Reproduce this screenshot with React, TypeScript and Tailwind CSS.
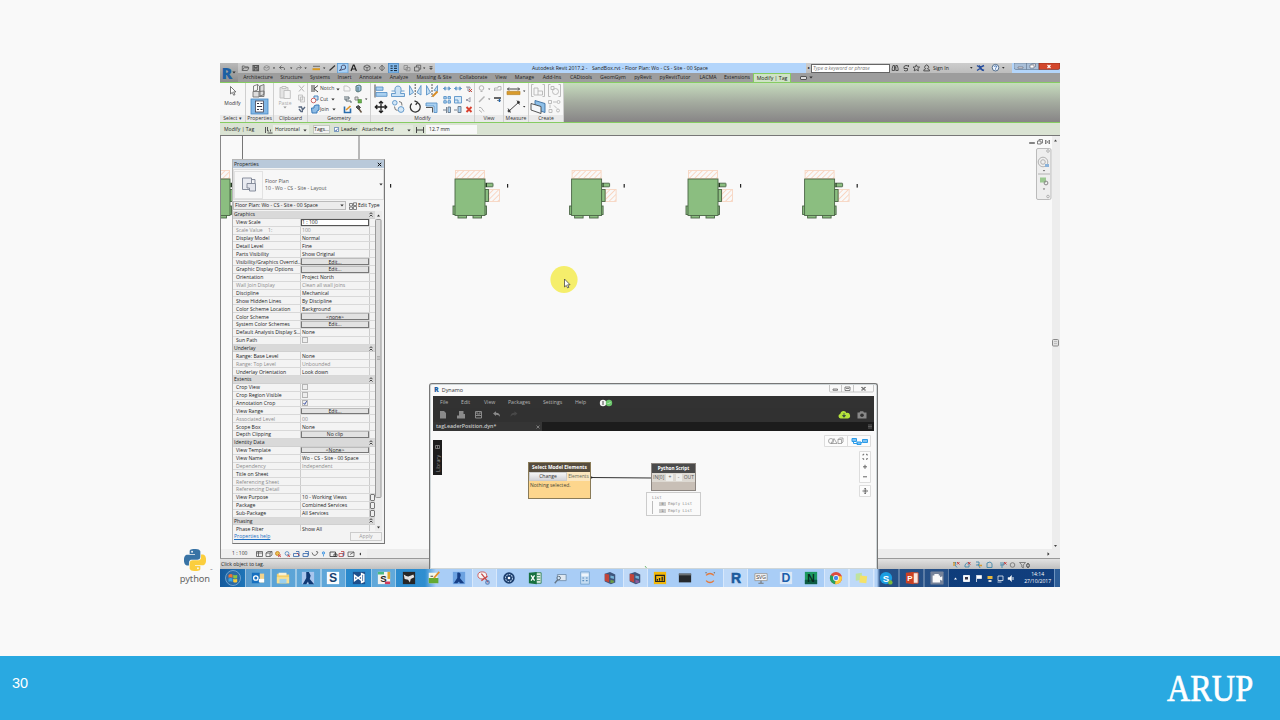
import React from 'react';

type Kids = { children?: React.ReactNode };

/* ---------- shared pieces ---------- */

function Caret({ c = '#333' }: { c?: string }) {
  return (
    <svg width="4" height="3" viewBox="0 0 4 3" className="shrink-0">
      <path d="M0.3 0.5h3.4L2 2.6z" fill={c} />
    </svg>
  );
}

/* ---------- title bar and tabs ---------- */

function QuickAccess() {
  return (
    <svg width="197" height="10" viewBox="238 63 197 10" fill="none" stroke="#555" strokeWidth="0.8" className="shrink-0">
      <path d="M242.300 70.500v-4.500h2.200l.7.900h3v1M242.300 70.500l1.500-2.700h5.200l-1.600 2.700z" />
      <path d="M253 65.500h5.500v5.200H253zM254.300 65.500v1.900h2.900v-1.900M254.300 70.700v-1.800h2.900v1.800" strokeWidth="1.1" />
      <path d="M264 69.500v-2.500l2.500-1.500 2.700 1.200v2.500l-2.500 1.300zM264 67l2.500 1 2.700-1.300" stroke="#888" />
      <path d="M272.800 67.500h2.400l-1.200 1.500zM290 67.500h2.400l-1.200 1.500zM304.400 67.500h2.400l-1.200 1.500zM323 67.500h2.400l-1.200 1.500zM373.700 67.500h2.400l-1.200 1.500zM423 67.500h2.400l-1.200 1.500z" fill="#333" stroke="none" />
      <path d="M279.500 67.500l2-2M279.500 67.500l2 1.800M279.500 67.500h3.800q2 .5 1 2.500" />
      <path d="M301.500 67.500l-2-2M301.500 67.500l-2 1.800M301.500 67.500h-3.500q-2 .5-1 2.500" stroke="#777" />
      <path d="M313 66.300h7" />
      <path d="M312.500 68.200h7.500v2h-7.500z" fill="#d99a25" stroke="none" />
      <path d="M329.500 70.500l5.500-5" stroke="#333" strokeWidth="1.200" />
      <rect x="337.500" y="63.500" width="10.500" height="9.500" fill="#a9d2f7" stroke="#5d9bd3" />
      <path d="M339.500 70.500l2-2.300a2.200 2.200 0 1 1 1.700 1.200z" stroke="#335" />
      <path d="M351 71l2.300-6h.8l2.300 6M352 69h3.500" stroke="#222" strokeWidth="1.200" />
      <path d="M364 66.300l3-1.300 3 1.300v3.200l-3 1.500-3-1.500zM364 66.300l3 1.400 3-1.400M367 67.700v3.200" />
      <path d="M382 65.200l2.600 2.800-2.600 2.800-2.600-2.800zM382 65.200v5.600" />
      <rect x="388.500" y="63.500" width="10" height="9.500" fill="#82b8ea" stroke="#4b8cc9" />
      <path d="M390.500 66h2.200M394 66h3M390.500 68.300h2.200M394 68.300h3M390.500 70.600h2.200M394 70.600h3" stroke="#123" strokeWidth="1" />
      <path d="M404 65.500h3.500v4H404zM406 67.500h4v3.300h-4z" stroke="#888" />
      <path d="M414.500 67h4.500v4h-4.500zM416.500 67v-1.800h4.200v4H419" />
      <path d="M429.500 66.500h3M429.700 68h2.600l-1.300 1.600z" fill="#333" />
    </svg>
  );
}

const tabs: [string, string][] = [
  ['Architecture', 'w-[40px]'], ['Structure', 'w-[27px]'], ['Systems', 'w-[30px]'], ['Insert', 'w-[19px]'],
  ['Annotate', 'w-[33px]'], ['Analyze', 'w-[24px]'], ['Massing & Site', 'w-[46px]'], ['Collaborate', 'w-[33px]'],
  ['View', 'w-[22px]'], ['Manage', 'w-[25px]'], ['Add-Ins', 'w-[30px]'], ['CADtools', 'w-[28px]'],
  ['GeomGym', 'w-[36px]'], ['pyRevit', 'w-[24px]'], ['pyRevitTutor', 'w-[40px]'], ['LACMA', 'w-[26px]'], ['Extensions', 'w-[32px]'],
];

function Header() {
  return (
    <div className="flex h-[19px] w-full bg-[#9d9d9d]">
      <div className="flex w-[18px] items-center justify-center bg-gradient-to-b from-[#b9b9b9] to-[#8c8c8c]">
        <span className="text-[16px] leading-none font-extrabold text-[#1d5fa3]">R</span>
        <Caret />
      </div>
      <div className="flex flex-1 flex-col">
        <div className="flex h-[10px] items-center bg-gradient-to-b from-[#cdcdcd] to-[#bdbdbd]">
          <QuickAccess />
          <div className="flex h-full w-[371px] items-center bg-[#b3d5fb] pl-[97px] text-[5.100px] whitespace-pre text-[#222]">
            <span className="w-[60px] pt-px">Autodesk Revit 2017.2 -</span>
            <span className="pt-px">SandBox.rvt - Floor Plan: Wo - CS - Site - 00 Space</span>
          </div>
          <div className="flex w-[5px] justify-center text-[4px]">▸</div>
          <div className="flex h-[9px] w-[79px] items-center border border-[#666] bg-white pt-px pl-px text-[5px] whitespace-nowrap text-[#777] italic">Type a keyword or phrase</div>
          <svg width="42" height="10" viewBox="890 63 42 10" fill="none" stroke="#444" strokeWidth="0.9" className="shrink-0">
            <path d="M893 65.500h1.500v5h-2.300v-2zM897.300 65.500h-1.500v5h2.300v-2zM894.500 67.700h1.300" />
            <path d="M904 66.500q2-2 4-.5M904 66.500v2h3.500v2q-2 1-3.500-.3M908.500 65v2" />
            <path d="M916.300 64.800l1 2.100 2.300.2-1.700 1.500.5 2.300-2.100-1.200-2.100 1.200.5-2.300-1.700-1.500 2.300-.2z" />
            <path d="M923.700 70.900q0-2 2.100-2.200a1.900 1.900 0 1 1 1.700 0q2.100.2 2.100 2.200z" />
          </svg>
          <span className="w-[37px] pt-px pl-px text-[5.100px] text-[#222]">Sign In</span>
          <svg width="43" height="10" viewBox="969 63 43 10" fill="none" className="shrink-0">
            <path d="M970 67h2.600l-1.300 1.700zM1002 67h2.600l-1.300 1.700z" fill="#333" />
            <path d="M977 65.500l3 2 4-2M977 70.500l3-2 4 2M979 65.500l3.500 5" stroke="#294f9d" strokeWidth="1.400" />
            <circle cx="995.500" cy="67.700" r="3.300" fill="#eef4fb" stroke="#55708e" />
            <path d="M994.500 66.800q.2-1 1.100-1t1 1q0 .5-1 1.200v.6M995.600 69.400v.7" stroke="#2a5fa8" strokeWidth="0.900" />
          </svg>
          <div className="flex h-full flex-1 justify-end bg-[#b3d5fb]">
            <svg width="46" height="8" viewBox="0 0 46 8">
              <path d="M0 0h25v6.500H2q-2 0-2-2z" fill="#a9bfd8" stroke="#5c6f86" strokeWidth="0.600" />
              <path d="M25 0h21v4.500q0 2-2 2H25z" fill="#d3472c" stroke="#7b2a1c" strokeWidth="0.600" />
              <path d="M12.500 0v6.500" stroke="#5c6f86" strokeWidth="0.600" />
              <path d="M4 4h5v1.200H4zM16 2h4v3h-4zM17.500 1h4v3" fill="#fff" stroke="#445" strokeWidth="0.500" />
              <path d="M33.500 2l3 3M36.500 2l-3 3" stroke="#fff" strokeWidth="1.100" />
            </svg>
          </div>
        </div>
        <div className="flex h-[9px] items-center text-[5.200px] text-[#222]">
          {tabs.map(([t, w]) => (
            <span key={t} className={`${w} shrink-0 pt-[1.500px] text-center whitespace-nowrap`}>{t}</span>
          ))}
          <span className="flex h-full w-[38px] items-center justify-center border border-b-0 border-[#86cc62] bg-[#cfe3c6] pt-px text-center whitespace-nowrap">Modify | Tag</span>
          <span className="ml-[9px] flex h-[4px] w-[7px] items-center justify-center rounded-[1px] border border-[#555] bg-[#ddd]" />
          <span className="ml-[2px] flex"><Caret /></span>
        </div>
      </div>
    </div>
  );
}

/* ---------- ribbon ---------- */

function Panel({ w, label, children }: Kids & { w: string; label: string }) {
  return (
    <div className={`flex ${w} shrink-0 flex-col border-r border-[#cfcfcf] bg-[#f7f7f7]`}>
      <div className="flex h-[32px]">{children}</div>
      <div className="flex h-[7px] items-center justify-center bg-[#e9e9e9] pt-px text-[5.100px] whitespace-nowrap text-[#333]">{label}</div>
    </div>
  );
}

function Ribbon() {
  return (
    <div className="flex h-[41px] border-y border-[#86cc62] bg-gradient-to-b from-[#c6dcbd] via-[#a4ab9f] to-[#878586]">
      <Panel w="w-[26px]" label="Select ▾">
        <div className="flex w-full flex-col items-center pt-[3px]">
          <svg width="8" height="10" viewBox="0 0 8 10"><path d="M1.500 0.500v7.500l1.800-1.600 1.400 2.800 1.300-.6-1.400-2.700h2.300z" fill="#fff" stroke="#555" strokeWidth="0.800" /></svg>
          <span className="mt-[4px] text-[5.100px] text-[#333]">Modify</span>
        </div>
      </Panel>
      <Panel w="w-[28px]" label="Properties">
        <svg width="27" height="32" viewBox="246 83 27 32" fill="none" stroke="#666" strokeWidth="0.8">
          <path d="M253.500 86l4-1.500v5.500l-4 1.500zM257.500 84.500l2 1.500v5" />
          <path d="M260 86l4-1.500v10l-4 1.500zM253 91.500h6v5.500h-6zM259 91.500l5-.5v5.500h-5" fill="#ddd" />
          <rect x="251" y="99" width="17" height="15" fill="#82b7e6" stroke="#4587c2" />
          <rect x="255.500" y="101" width="8" height="11" fill="#fff" stroke="#445" />
          <path d="M257 103.500h2M260.500 103.500h2M257 106.500h5M257 109.500h2M260.500 109.500h2" stroke="#334" strokeWidth="1.200" />
        </svg>
      </Panel>
      <Panel w="w-[34px]" label="Clipboard">
        <div className="flex w-[22px] flex-col items-center pt-[3px]">
          <svg width="12" height="13" viewBox="0 0 12 13" fill="#e4e4e4" stroke="#bdbdbd" strokeWidth="0.900"><path d="M1 1.500h8V12H1z" /><path d="M3 0.500h4v2H3zM5 4.500h6.300v8H5z" fill="#f4f4f4" /></svg>
          <span className="pt-px text-[5.100px] leading-[6px] text-[#aaa]">Paste</span>
          <Caret c="#999" />
        </div>
        <svg width="11" height="32" viewBox="296 83 11 32" fill="none" stroke="#b5b5b5">
          <path d="M299 85.500l5 6M304 85.500l-5 6" />
          <path d="M298.500 95h4v5h-4zM300.500 97h4v5h-4z" fill="#eee" strokeWidth="0.700" />
          <path d="M298.500 107h3l1 3 2.500-3M299 109l2 2.500h2" stroke="#56667e" strokeWidth="1.300" />
        </svg>
      </Panel>
      <Panel w="w-[63px]" label="Geometry">
        <svg width="12" height="32" viewBox="308 83 12 32" fill="none" strokeWidth="1">
          <path d="M312 85v7M314 85v7M318 85.500l-4 3.300 4 3.200" stroke="#444" />
          <path d="M314 96h4v4h-4z" fill="#cfe2f3" stroke="#4b84bd" /><circle cx="313.500" cy="100.500" r="2.300" fill="#fff" stroke="#c66" />
          <path d="M314 106l2-1h3v5l-2 1v2h-5l-.5-5h2.500z" fill="#8fbde6" stroke="#3a7ab8" />
        </svg>
        <div className="flex w-[20px] flex-col pt-px text-[5.100px] text-[#333]">
          <span className="flex h-[10.300px] items-center justify-between whitespace-nowrap"><i className="w-[14px] not-italic">Notch</i><Caret /></span>
          <span className="flex h-[10.300px] w-[15px] items-center justify-between">Cut<Caret /></span>
          <span className="flex h-[10.300px] w-[16px] items-center justify-between">Join<Caret /></span>
        </div>
        <svg width="29" height="32" viewBox="341 83 29 32" fill="none" strokeWidth="1">
          <path d="M345 86h3l3 2v3h-6z" stroke="#c5c5c5" />
          <path d="M357 86l3-1 2 1v4.500l-3 1.500-2-1zM359 87v4.500" stroke="#577" fill="#9cc3e4" />
          <path d="M345 97h5v2h-5M347 99v2h5v2" stroke="#5b6a73" />
          <path d="M356 97h3v3h-3z" stroke="#888" fill="#ddd" /><path d="M359 99.500h3.500v3.500H359z" fill="#6ab04a" stroke="#387f2a" strokeWidth="0.500" />
          <path d="M366 98.500h2.400l-1.200 1.500z" fill="#333" />
          <path d="M345.500 106.500v6h6v-4" stroke="#2a6cac" strokeWidth="1.600" /><path d="M347 110l4.500-4" stroke="#e0962c" strokeWidth="1.600" />
          <path d="M357 107l2.500-1.500 2 2-2 2z" fill="#555" stroke="#444" /><path d="M360 109l2.500 3.500" stroke="#654" strokeWidth="1.500" />
        </svg>
      </Panel>
      <Panel w="w-[104px]" label="Modify">
        <svg width="103" height="32" viewBox="371 83 103 32" fill="none" stroke="#5a93c7" strokeWidth="0.9">
          <path d="M375 84.500v13" stroke="#333" /><path d="M376 87h7v3.300h-7zM376 92.500h11v3.800h-11z" fill="#a9d0f0" />
          <path d="M391.500 96.500h13v-3h-4q2-7.500-2.500-7.500t-2.500 7.500h-4z" fill="#cbe2f5" /><path d="M391.500 91h3.500M401 91h3.500" />
          <path d="M409.500 85.500v9.500l4-2.500zM421 85.500v9.500l-4-2.500z" fill="#c5dff3" /><path d="M415.200 84v13" stroke="#444" strokeDasharray="2 1" />
          <path d="M426.500 85.500v9.500l4-2.500zM437.500 85.500v6l-3.500-1z" fill="#c5dff3" /><path d="M432 84v13" stroke="#444" strokeDasharray="2 1" /><path d="M432.500 96.500l5-5" stroke="#d88b22" strokeWidth="1.800" />
          <path d="M381 101.500v11M375.500 107h11M379 103.300l2-2 2 2M379 110.700l2 2 2-2M377.300 105l-2 2 2 2M384.700 105l2 2-2 2" stroke="#222" strokeWidth="1.300" />
          <circle cx="394.800" cy="102.800" r="2.300" fill="#d5e8f7" /><circle cx="401" cy="109.500" r="2.900" fill="#d5e8f7" /><path d="M399 101.500q3.500 0 3 4M394.500 106.500q0 4 3 4" stroke="#666" />
          <path d="M411.700 103.500a5 5 0 1 0 5.200-1.200M414.500 100.800l3 1.400-1.800 2.700" stroke="#333" strokeWidth="1.300" />
          <path d="M426 103h11v9.500h-3V106h-8z" fill="#a9d0f0" /><path d="M426 107.500h6.500v5" stroke="#444" />
          <path d="M443 88.500h2.700M448.300 88.500h2.700M444.500 87.200h1.500v2.600h-1.500zM448 87.200h1.500v2.600h-1.500z" /><path d="M454 88.500h2.700M459.300 88.500h2.700M455.500 87.200h1.500v2.600h-1.500zM459 87.200h1.500v2.600h-1.500z" />
          <path d="M466 87h4v2M468 87v4h3" stroke="#889" /><path d="M469 89l3 3M472 89l-3 3" stroke="#c53b2e" />
          <path d="M443.800 96.500h2.500v2.400h-2.500zM448 96.500h2.500v2.400H448zM443.800 100.700h2.500v2.400h-2.500zM448 100.700h2.500v2.400H448z" fill="#a9d0f0" />
          <path d="M454.500 96.500h7v6.500h-7zM454.500 100h3.500v3" fill="#d5e8f7" /><path d="M466 99.500h2l2-2v4.500l-2-1.500h-2" stroke="#889" strokeWidth="0.800" />
          <path d="M443 110h3M446.500 107v6M448 107h2.500v5.500H448z" fill="#a9d0f0" stroke="#678" /><path d="M454 110h3M458 106.500h3v6h-3z" fill="#a9d0f0" stroke="#678" />
          <path d="M466.500 107l5 5M471.500 107l-5 5" stroke="#d9402f" strokeWidth="1.900" />
        </svg>
      </Panel>
      <Panel w="w-[29px]" label="View">
        <svg width="28" height="32" viewBox="475 83 28 32" fill="none" stroke="#b5b5b5">
          <circle cx="481.500" cy="88" r="2.300" /><path d="M480.500 91.500h2" /><path d="M488 88.500h2.400l-1.200 1.500zM488 98.500h2.400l-1.200 1.500z" fill="#777" stroke="none" />
          <path d="M494.500 91v-3h3.500v-1.500h3v3.500h-6.500z" /><path d="M479 102l5.500-5.500" strokeWidth="1.500" />
          <path d="M494 98h7" stroke="#555" strokeWidth="1.800" /><path d="M497 100.500h4" stroke="#888" /><path d="M499.500 99v3" stroke="#2468b0" strokeWidth="1.500" />
          <path d="M479 107.500h2l3 4M479 110l3 2.500" />
        </svg>
      </Panel>
      <Panel w="w-[25px]" label="Measure">
        <svg width="24" height="32" viewBox="504 83 24 32" fill="none" stroke="#444">
          <path d="M507.500 89h12M509 87.500l-1.500 1.500 1.500 1.500M518 87.500l1.500 1.500-1.500 1.500" />
          <path d="M507 91.300h13v3.300h-13z" fill="#d99b2b" stroke="#b9852a" strokeWidth="0.700" />
          <path d="M509 111l10-9M508 108.500l2.500 4M517 100.500l2.500 4" /><circle cx="509" cy="111" r="1" fill="#222" /><circle cx="518.500" cy="102.300" r="1" fill="#222" />
          <path d="M523 90.500h2.400l-1.200 1.500zM523 106h2.400l-1.200 1.500z" fill="#333" stroke="none" />
        </svg>
      </Panel>
      <Panel w="w-[35px]" label="Create">
        <svg width="34" height="32" viewBox="529 83 34 32" fill="none" stroke="#b5b5b5" strokeWidth="0.900">
          <path d="M533.500 84.500h-2v12h2M542.500 84.500h2v12h-2M534 88h4v7h-4zM538 91h4.500v4H538" />
          <path d="M550.500 84.500h-2v12h2M558.500 84.500h2v12h-2M551 86.500h3v3h-3z" /><circle cx="555.500" cy="91.500" r="3" />
          <path d="M533 102l10 3v9l-10-3.500z" fill="#8dbfe8" stroke="#3b6fa1" transform="translate(2 -1.500)" /><path d="M531 103.500l10 3v7l-10-3.500z" fill="#f4f7fa" stroke="#444" />
          <path d="M548.500 100.500h3v3h-3zM549 109.500h3v3h-3zM553 102h3.500M550 104.500v3.500M554 105.500l3 3" /><circle cx="558.500" cy="102" r="1.500" /><circle cx="558" cy="110.500" r="1.500" />
        </svg>
      </Panel>
    </div>
  );
}

function OptionsBar() {
  return (
    <div className="flex h-[13px] items-center border-b border-[#777] bg-[#dae3d3] pt-px text-[5.100px] whitespace-nowrap text-[#222]">
      <span className="w-[44px] pt-px pl-[4px]">Modify | Tag</span>
      <svg width="9" height="8" viewBox="0 0 9 8" fill="none" stroke="#555"><path d="M1.500 1v6M3.500 1v4h1.500M3.500 7h5M6.500 3.500v2" /></svg>
      <div className="flex h-[9px] w-[36px] items-center justify-between bg-[#e9eee5] pt-px pr-[2px] pl-[2px]">Horizontal<Caret /></div>
      <div className="ml-[4px] flex h-[9px] w-[17px] items-center justify-center border border-[#c3c8bf] bg-[#f3f3f3]">Tags...</div>
      <div className="ml-[4px] flex h-[5px] w-[5px] items-center border border-[#7d9cc0] bg-white"><svg width="4" height="4" viewBox="0 0 4 4"><path d="M0.500 2l1 1.200 2-3" stroke="#2b4c9b" fill="none" /></svg></div>
      <span className="ml-[2px] w-[19px] pt-px">Leader</span>
      <div className="flex h-[9px] w-[53px] items-center justify-between bg-[#e3eadd] pt-px pr-[2px] pl-[2px]">Attached End<Caret /></div>
      <svg width="12" height="8" viewBox="0 0 12 8" fill="none" stroke="#444"><path d="M3.500 1v6M10.500 1v6M4 4h6" /></svg>
      <div className="ml-px flex h-[9px] w-[51px] items-center bg-[#f8f8f8] pt-px pl-[3px]">12.7 mm</div>
    </div>
  );
}

/* ---------- drawing area ---------- */

function Equipment({ x }: { x: number }) {
  return (
    <g transform={`translate(${x} 0)`} strokeWidth="0.9">
      <rect x="0.500" y="34.500" width="29" height="8" fill="url(#hatch)" stroke="#f7d6c2" />
      <rect x="34" y="53.500" width="10.500" height="12" fill="url(#hatch)" stroke="#f7d6c2" />
      <g fill="#8bbe80" stroke="#4a6545">
        <rect x="-2" y="70" width="4" height="8.500" /><rect x="28" y="70" width="3.500" height="8.500" />
        <rect x="3" y="78" width="8.500" height="4" /><rect x="18" y="78" width="8.500" height="4" />
        <rect x="30" y="53.500" width="3.500" height="12" />
        <rect x="30" y="47.200" width="8" height="3.600" rx="0.500" />
        <rect x="0" y="43" width="30" height="36.500" />
      </g>
      <path d="M31.500 47v4" stroke="#1c2a1a" /><rect x="52" y="48" width="1.200" height="3.600" fill="#222" />
    </g>
  );
}

function DrawingArea() {
  return (
    <div className="flex h-[413px] border-l border-[#888] bg-[#f9f9f9]">
      <svg width="831" height="413" viewBox="1 0 831 413">
        <defs>
          <pattern id="hatch" width="3.800" height="3.800" patternUnits="userSpaceOnUse" patternTransform="rotate(45)">
            <path d="M0.500 0v3.800" stroke="#f9d3bd" strokeWidth="0.900" />
          </pattern>
        </defs>
        <path d="M22.500 0v23M139 0v23" stroke="#666" strokeWidth="0.900" />
        {[-20, 118, 235, 351.600, 468, 584.600].map((x) => (x === 118 ? null : <Equipment key={x} x={x} />))}
        <rect x="170" y="48" width="1.200" height="3.600" fill="#222" />
        <circle cx="344" cy="143.500" r="13.600" fill="#f5ee6b" />
        <path d="M344.500 143v8l1.800-1.600 1.300 2.500 1.300-.6-1.300-2.500h2.500z" fill="#fff" stroke="#333" strokeWidth="0.700" />
        <g fill="none" stroke="#666" strokeWidth="0.800">
          <path d="M809.500 6.500h5v1h-5z" /><path d="M817.500 5h3.500v3h-3.500zM819 5V3.500h3.500v3.500H821" /><path d="M825.500 4l4 4M829.500 4l-4 4M825.500 4v4M829.500 4v4" />
        </g>
        <rect x="816.500" y="12.500" width="14.500" height="51" rx="1.500" fill="#eee" stroke="#bbb" />
        <g fill="none" stroke="#aaa" strokeWidth="0.900">
          <circle cx="828" cy="15" r="1.300" /><circle cx="828" cy="60.500" r="1.300" />
          <circle cx="823" cy="26" r="4.800" /><circle cx="823" cy="26" r="2.300" /><path d="M818 38h12" />
        </g>
        <path d="M825 28h4v3h-4z" fill="#8ab2da" /><path d="M820 41.500h6v5h-6z" fill="#9bc891" /><circle cx="826" cy="47" r="1.900" fill="none" stroke="#888" /><path d="M822.800 34h2.400l-1.200 1.500zM822.800 52.500h2.400l-1.200 1.500z" fill="#666" />
      </svg>
      <div className="flex w-[8px] flex-col items-center bg-[#ededed] text-[#444]">
        <svg width="8" height="413" viewBox="0 0 8 413"><path d="M2 5.500h3L3.500 3.500zM2 409h3l-1.500 2z" fill="#444" /><rect x="0.500" y="203.500" width="6" height="6.500" rx="1" fill="#e1e1e1" stroke="#888" /><path d="M2 205.500h3M2 207.500h3" stroke="#999" strokeWidth="0.500" /></svg>
      </div>
    </div>
  );
}

/* ---------- properties palette ---------- */

type Row = { k?: string; n: string; v?: string };
const rows: Row[] = [
  { k: 'head', n: 'Graphics' }, { k: 'field', n: 'View Scale', v: '1 : 100' }, { k: 'dim', n: 'Scale Value    1:', v: '100' },
  { n: 'Display Model', v: 'Normal' }, { n: 'Detail Level', v: 'Fine' }, { n: 'Parts Visibility', v: 'Show Original' },
  { k: 'btn', n: 'Visibility/Graphics Overrid...', v: 'Edit...' }, { k: 'btn', n: 'Graphic Display Options', v: 'Edit...' },
  { n: 'Orientation', v: 'Project North' }, { k: 'dim', n: 'Wall Join Display', v: 'Clean all wall joins' }, { n: 'Discipline', v: 'Mechanical' },
  { n: 'Show Hidden Lines', v: 'By Discipline' }, { n: 'Color Scheme Location', v: 'Background' }, { k: 'btn', n: 'Color Scheme', v: '<none>' },
  { k: 'btn', n: 'System Color Schemes', v: 'Edit...' }, { n: 'Default Analysis Display S...', v: 'None' }, { k: 'check', n: 'Sun Path' },
  { k: 'head', n: 'Underlay' }, { n: 'Range: Base Level', v: 'None' }, { k: 'dim', n: 'Range: Top Level', v: 'Unbounded' }, { n: 'Underlay Orientation', v: 'Look down' },
  { k: 'head', n: 'Extents' }, { k: 'check', n: 'Crop View' }, { k: 'check', n: 'Crop Region Visible' }, { k: 'checked', n: 'Annotation Crop' },
  { k: 'btn', n: 'View Range', v: 'Edit...' }, { k: 'dim', n: 'Associated Level', v: '00' }, { n: 'Scope Box', v: 'None' }, { k: 'btn', n: 'Depth Clipping', v: 'No clip' },
  { k: 'head', n: 'Identity Data' }, { k: 'btn', n: 'View Template', v: '<None>' }, { n: 'View Name', v: 'Wo - CS - Site - 00 Space' }, { k: 'dim', n: 'Dependency', v: 'Independent' },
  { n: 'Title on Sheet' }, { k: 'dim', n: 'Referencing Sheet' }, { k: 'dim', n: 'Referencing Detail' },
  { k: 'more', n: 'View Purpose', v: '10 - Working Views' }, { k: 'more', n: 'Package', v: 'Combined Services' }, { k: 'more', n: 'Sub-Package', v: 'All Services' },
  { k: 'head', n: 'Phasing' }, { n: 'Phase Filter', v: 'Show All' },
];

function Value({ r }: { r: Row }) {
  if (r.k === 'btn') return <span className="flex h-[6.500px] w-full items-center justify-center border border-[#777] border-t-[#bbb] bg-[#e2e2e2] pt-px leading-[5px]">{r.v}</span>;
  if (r.k === 'field') return <span className="flex h-[7px] w-full items-center border border-[#555] bg-white pt-px leading-[5px]">{r.v}</span>;
  if (r.k === 'check' || r.k === 'checked')
    return (
      <svg width="6" height="6" viewBox="0 0 6 6" className="ml-px"><rect x="0.500" y="0.500" width="5" height="5" fill="#eee" stroke="#b5b5b5" />{r.k === 'checked' && <path d="M1.500 3l1.200 1.400 2-3.200" fill="none" stroke="#3a4fa3" />}</svg>
    );
  return <span className="pt-[1.500px] pl-px">{r.v}</span>;
}

function PropertyRow({ r }: { r: Row }) {
  if (r.k === 'head')
    return (
      <div className="flex h-[7.860px] shrink-0 items-center justify-between border-b border-[#d0d0d0] bg-[#d9d9d9] pr-[2px] pl-px">
        <span className="pt-[1.500px]">{r.n}</span>
        <svg width="4" height="5" viewBox="0 0 4 5" fill="none" stroke="#333" strokeWidth="0.900"><path d="M0.500 2.200l1.500-1.500 1.500 1.500M0.500 4.500l1.500-1.500 1.500 1.500" /></svg>
      </div>
    );
  return (
    <div className={`flex h-[7.860px] shrink-0 items-stretch border-b border-[#d8d8d8] whitespace-pre ${r.k === 'dim' ? 'text-[#8b8b8b]' : ''}`}>
      <span className="flex w-[68px] items-center border-r border-[#ccc] pt-[1.500px] pl-[3px]">{r.n}</span>
      <span className="flex w-[69px] items-center border-r border-[#ccc]"><Value r={r} /></span>
      {r.k === 'more' && <span className="flex-1 rounded-[1px] border border-[#777] bg-[#eee]" />}
    </div>
  );
}

function PropertiesPalette() {
  return (
    <div className="absolute top-[96px] left-[12px] flex h-[385px] w-[153px] flex-col border border-[#b5b5b5] border-r-[#777] border-b-[#777] bg-[#f3f3f3] text-[5.100px] text-[#222]">
      <div className="flex h-[8px] shrink-0 items-center justify-between bg-[#b9c9da] pr-[2px] pl-px"><span className="pt-px">Properties</span>
        <svg width="5" height="5" viewBox="0 0 5 5"><path d="M0.800 0.800l3.400 3.400M4.200 0.800L0.800 4.200" stroke="#111" /></svg>
      </div>
      <div className="mt-px flex h-[31px] shrink-0 items-center border border-[#ddd] bg-[#f7f7f7]">
        <div className="flex h-[28px] w-[29px] items-center justify-center border border-[#e2e2e2]">
          <svg width="16" height="15" viewBox="0 0 16 15" fill="#e3e5ec" stroke="#7d8494" strokeWidth="0.900"><path d="M1.500 1h9v11.500h-9zM10.500 2.500h3.500v4" fill="#e9ebf1" /><path d="M6 6.500h8.500v7.500h-6v-3H6z" /></svg>
        </div>
        <div className="ml-[2px] flex flex-1 flex-col leading-[7px] text-[#555]"><span>Floor Plan</span><span>10 - Wo - CS - Site - Layout</span></div>
        <Caret />
      </div>
      <div className="flex h-[11px] shrink-0 items-center whitespace-nowrap">
        <div className="flex h-[9px] w-[113px] items-center justify-between border border-[#bbb] bg-[#ececec] pr-px pl-px">Floor Plan: Wo - CS - Site - 00 Space<Caret /></div>
        <svg width="8" height="8" viewBox="0 0 8 8" className="ml-[3px]" fill="none" stroke="#666" strokeWidth="0.800"><path d="M0.500 1.500h3v2.500h-3zM0.500 5h3v2.500h-3zM4.500 0.800h3v2.700h-3zM4.500 4.500h3v3h-3z" /></svg>
        <span className="ml-px">Edit Type</span>
      </div>
      <div className="flex h-[320px] shrink-0">
        <div className="flex w-[142px] flex-col overflow-hidden">
          {rows.map((r, i) => <PropertyRow key={i} r={r} />)}
        </div>
        <svg width="7" height="320" viewBox="0 0 7 320" className="bg-[#ececec]"><path d="M2 5.500h3L3.500 3.500zM2 315.500h3l-1.500 2z" fill="#333" /><rect x="0.500" y="8.500" width="5.500" height="278" rx="1" fill="#dadada" stroke="#9a9a9a" /><path d="M2 145.500h3M2 147h3M2 148.500h3" stroke="#888" strokeWidth="0.500" /></svg>
      </div>
      <div className="flex flex-1 items-start justify-between pr-[2px] pl-px">
        <span className="leading-[10px] text-[#1d6fc4] underline">Properties help</span>
        <span className="mt-px flex h-[9px] w-[32px] items-center justify-center border border-[#ccc] text-[#999]">Apply</span>
      </div>
    </div>
  );
}

/* ---------- Dynamo window ---------- */

function DynamoWindow() {
  return (
    <div className="absolute top-[320px] left-[209px] flex h-[186px] w-[449px] flex-col rounded-t-[3px] border-x border-t border-[#777] bg-[#f9f9f9] px-[3px] pt-px shadow-[inset_0_0_0_1px_#cfd6d8]">
      <div className="flex h-[11px] shrink-0 items-center text-[5.400px] text-[#333]">
        <span className="ml-px text-[7px] font-extrabold text-[#1d5fa3]">R</span><span className="ml-[3px] flex-1">Dynamo</span>
        <svg width="45" height="8" viewBox="0 0 45 8" className="self-start" fill="none" stroke="#bbb" strokeWidth="0.800"><path d="M0.500 0v6q0 1 1 1h42q1 0 1-1V0M12.500 0v7M24.500 0v7" /><path d="M4 4h4.500v1.300H4zM16 2h5v3.500h-5zM17 3.500h3M32 2l4 3.500M36 2l-4 3.500M33 2l4 3.500M37 2l-4 3.500" stroke="#666" /></svg>
      </div>
      <div className="flex h-[12px] shrink-0 items-center bg-[#323232] pt-px text-[5.200px] text-[#b5b5b5]">
        <span className="w-[22px] pl-[7px]">File</span><span className="w-[23px] pl-[6px]">Edit</span><span className="w-[24px] pl-[6px]">View</span><span className="w-[35px] pl-[6px]">Packages</span><span className="w-[32px] pl-[6px]">Settings</span><span className="w-[30px] pl-[6px]">Help</span>
        <svg width="14" height="8" viewBox="0 0 14 8"><circle cx="4" cy="4" r="3.200" fill="#f4f4f4" /><path d="M4 2v4" stroke="#444" /><circle cx="10" cy="4" r="3.200" fill="#6cc66c" /><path d="M8.500 4l1 1 2-2" stroke="#d8f2d8" fill="none" strokeWidth="0.700" /></svg>
      </div>
      <div className="flex h-[14px] shrink-0 items-center justify-between bg-[#313131]">
        <svg width="90" height="14" viewBox="433 408 90 14" fill="#8a8a8a"><path d="M440 411h4l2 2v5.500h-6z" /><path d="M459 411h4.500v3H465v4.500h-8v-3h2z" /><path d="M475.500 411.500h6v6.500h-6zM477 411.500v2.500h3v-2.500M475.500 415.500h6" fill="none" stroke="#8a8a8a" /><path d="M493 413.500l3-2.300v1.500q4 0 4 4-1-2-4-2v1.300z" /><path d="M517.500 413.500l-3-2.300v1.500q-4 0-4 4 1-2 4-2v1.300z" fill="#484848" /></svg>
        <svg width="40" height="14" viewBox="833 408 40 14"><path d="M839.500 418.500a2.300 2.300 0 0 1-.3-4.500 3.300 3.300 0 0 1 6.300-1 2.700 2.700 0 0 1 1.500 5.500z" fill="#b5e33b" /><path d="M843 413v3M841.500 415.500l1.500 1.800 1.500-1.800z" fill="#344" stroke="#344" strokeWidth="0.800" /><path d="M856.500 412.500h2l.7-1.200h3l.7 1.200h2.600v6h-9z" fill="#888" /><circle cx="861" cy="415.300" r="1.800" fill="#313131" /></svg>
      </div>
      <div className="flex h-[9px] shrink-0 bg-[#1c1c1c] text-[5.300px] text-[#c9c9c9]">
        <span className="flex w-[109px] items-center justify-between bg-[#353535] pr-[2px] pl-[3px] font-semibold">tagLeaderPosition.dyn*<svg width="4" height="4" viewBox="0 0 4 4"><path d="M0.500 0.500l3 3M3.500 0.500l-3 3" stroke="#999" strokeWidth="0.700" /></svg></span>
        <span className="flex flex-1 items-center justify-end pr-[2px]"><svg width="4" height="5" viewBox="0 0 4 5"><path d="M0 1h4M0 2.500h4M0 4h4" stroke="#777" strokeWidth="0.700" /></svg></span>
      </div>
      <div className="relative flex-1 overflow-hidden text-[5px]">
        <div className="absolute top-[9px] left-0 flex h-[35px] w-[9px] flex-col items-center justify-between bg-[#1d1d1d] pt-[5px] pb-[3px]">
          <svg width="5" height="4" viewBox="0 0 5 4" fill="none" stroke="#999" strokeWidth="0.700"><path d="M0.500 0.500h4v3h-4zM2.500 0.500v3" /></svg>
          <span className="rotate-180 text-[5.200px] leading-[6px] whitespace-nowrap text-[#999] [writing-mode:vertical-rl]">Library</span>
        </div>
        <svg width="440" height="138" viewBox="433 431 440 138" className="absolute top-0 left-0" fill="none">
          <path d="M591 477.500C610 477.500 630 478 652 478" stroke="#333" strokeWidth="1.100" />
          <circle cx="591.500" cy="477.500" r="1" fill="#222" />
          <path d="M824.500 435.500h23v11h-23zM847.500 435.500h23v11h-23zM859.500 451.500h11v31h-11zM859.500 485.500h11v11h-11z" stroke="#ddd" fill="#fcfcfc" />
          <circle cx="831" cy="441" r="2.500" stroke="#888" strokeWidth="0.700" /><path d="M831 443.500l3-5 3 5zM838 439.500h3.500v4H838zM838 439.500l1.500-1.500h3.500v4l-1.500 1.500" stroke="#888" strokeWidth="0.700" />
          <path d="M852 438.500h4.500v3H852zM857 442h4v2.500h-4zM862.500 439.500h5v3h-5z" fill="#7cc1f2" stroke="#2b9be8" /><path d="M853.500 442v1.500h4M861 443l1.500-1.500" stroke="#2b9be8" />
          <path d="M863 455.500v-1.200h1.200M866 454.300h1.200v1.200M863 458v1.200h1.200M866 459.200h1.200v-1.200M863 466.800h4M865 464.800v4M863 476.800h4M862.500 491h5.500M865.200 488.300v5.500M864.200 489.200l1-1 1 1M864.200 492.800l1 1 1-1" stroke="#666" strokeWidth="1" />
          <path d="M646.500 568l-1.500-2" stroke="#7b7" />
        </svg>
        <div className="absolute top-[31px] left-[95px] flex h-[37px] w-[63px] flex-col border border-[#8a7b58] bg-[#fdd68d]">
          <div className="flex h-[9px] items-center justify-center bg-[#574d3e] text-[4.900px] font-bold whitespace-nowrap text-white">Select Model Elements</div>
          <div className="flex h-[9px]"><span className="flex w-[38px] items-center justify-center border border-[#ccc] bg-gradient-to-b from-[#f5f5f5] to-[#d3d3d8] text-[#333]">Change</span><span className="flex flex-1 items-center justify-center bg-[#fbe6bf] text-[4.800px] text-[#665]">Elements</span></div>
          <span className="pl-px leading-[9px] text-[#443]">Nothing selected.</span>
        </div>
        <div className="absolute top-[32px] left-[218px] flex h-[28px] w-[45px] flex-col border border-[#8b8580] bg-[#c8bfb6]">
          <div className="flex h-[9px] items-center justify-center bg-[#4b4b4b] text-[4.700px] font-bold whitespace-nowrap text-white">Python Script</div>
          <div className="flex h-[9px] items-center justify-between bg-[#ddd9d2] px-px text-[#555]"><span>IN[0]</span><span className="w-[7px] bg-[#efefec] text-center leading-[7px]">+</span><span className="w-[6px] bg-[#efefec] text-center leading-[7px]">-</span><span>OUT</span></div>
        </div>
        <div className="absolute top-[61px] left-[213px] flex h-[24px] w-[55px] flex-col border border-[#ccc] bg-[#fafafa] pt-[2px] pl-[5px] font-['DejaVu_Sans_Mono',monospace] text-[4px] text-[#888]">
          <span className="leading-[6px]">List</span>
          <div className="flex flex-col border-l border-[#bbb] pl-[6px] leading-[6.500px]">
            <span className="flex items-center gap-[2px]"><b className="h-[4px] w-[7px] bg-[#ccc] text-center text-[3.500px] leading-[4px]">0</b>Empty List</span>
            <span className="flex items-center gap-[2px]"><b className="h-[4px] w-[7px] bg-[#ccc] text-center text-[3.500px] leading-[4px]">1</b>Empty List</span>
          </div>
        </div>
      </div>
    </div>
  );
}

/* ---------- bottom bars ---------- */

function ViewBar() {
  return (
    <div className="flex h-[9px] items-center border-l border-[#888] bg-[#f0f0f0] text-[5px] text-[#333]">
      <span className="w-[34px] pt-px pl-[11px] whitespace-nowrap">1 : 100</span>
      <svg width="112" height="9" viewBox="254 549 112 9" fill="none" stroke="#555" strokeWidth="0.800">
        <path d="M255.500 551.500h6v5h-6zM255.500 553h6M257.500 551.500v5" /><path d="M265 553h4v3.500h-4zM265 553l2-1.500h4v3.500l-2 1.500M269 553l2-1.500" />
        <circle cx="276.500" cy="553.500" r="2" fill="#ecc04e" stroke="#c47f20" /><path d="M277 554.500l3 2.500M280 554.500l-3 2.500" stroke="#c33" />
        <circle cx="286" cy="553.500" r="1.900" stroke="#4b84bd" /><path d="M286.500 554.500l2.500 2.500M289 554.500l-2.500 2.500" stroke="#c33" />
        <path d="M292.500 553.500h5v3h-5zM295 551.500h3v5" stroke="#36a" /><path d="M296 553l2.500 2.500" stroke="#c33" />
        <path d="M302 553.500h5v3h-5zM304 551.500h3.500v4" stroke="#36a" />
        <path d="M311 552.500q1 3.500 3 3t3-3.500l-2-.5" /><circle cx="322.500" cy="553" r="1.200" stroke="#3b8fd8" fill="#9cf" /><path d="M322.500 554.500v2" stroke="#3b8fd8" />
        <path d="M329 552h5.500v4.500H329zM333 554h3v2.500h-3z" stroke="#333" /><path d="M338 553.500h4v3h-4zM340 551.500h3v4" stroke="#b44" /><path d="M342.500 552.500v4" stroke="#36a" />
        <path d="M347 552v4.500h6V552zM349 554.500l4-2.500" /><path d="M360 552.500v3l-1.700-1.500z" fill="#333" stroke="none" />
      </svg>
      <div className="flex h-full flex-1 items-center justify-end bg-[#ececec] pr-[10px]"><svg width="3" height="4" viewBox="0 0 3 4"><path d="M0.500 0.300v3.400L2.500 2z" fill="#333" /></svg></div>
    </div>
  );
}

function StatusBar() {
  return (
    <div className="flex h-[11px] items-center justify-between border-t border-[#999] bg-gradient-to-b from-[#e2e2e2] to-[#c0c0c0] pr-[28px] pl-px text-[5.100px] text-[#222]">
      <span className="pt-px">Click object to tag.</span>
      <svg width="81" height="9" viewBox="951 559 81 9" fill="none" stroke="#777" strokeWidth="0.900">
        <path d="M953 561.500h3l-1 2.500 2 2.500M965 564q1-2.500 4-2.500v4.500h-4zM976 561h3v3h-3M978 563l2 4M987 562l3-1 2 1.500v4h-5zM1000 562h4v2h-4M1002 563v4" stroke="#48a" />
        <path d="M957 561l2.500 2.500M959.500 561l-2.500 2.500M968 561l2.500 2.500M970.500 561l-2.500 2.500M1004 561l2.500 2.500M1006.500 561l-2.500 2.500" stroke="#c33" /><path d="M954 561v4M979 564.500h3" stroke="#d79a31" strokeWidth="1.400" />
        <circle cx="1012.500" cy="564" r="2.300" /><path d="M1019.500 561.500h6l-2.200 2.500v3l-1.500-1v-2z" />
        <ellipse cx="1028" cy="564.500" rx="1.300" ry="2" stroke="#333" />
      </svg>
    </div>
  );
}

function Letter({ bg, c = '#fff', t }: { bg: string; c?: string; t: string }) {
  return <><rect x="1" y="1" width="14" height="14" fill={bg} /><text x="8" y="13" textAnchor="middle" fontSize="14" fontWeight="bold" fill={c}>{t}</text></>;
}

const taskIcons: React.ReactNode[] = [
  <><rect x="6" y="3" width="9" height="10" fill="#f3d38a" /><rect x="1" y="2" width="9" height="12" fill="#1670c0" /><circle cx="5.500" cy="8" r="2.500" fill="none" stroke="#fff" strokeWidth="1.500" /><path d="M9 9h6v4H9z" fill="#fff" /></>,
  <><path d="M1 3h5l1 1h8v10H1z" fill="#f1cf6c" /><path d="M3 2h9v3H3z" fill="#f8f1d5" /><path d="M1 7h14v7H1z" fill="#f7e093" /><path d="M4 9h8v5H4z" fill="#9bd0ee" /></>,
  <><rect x="1" y="1" width="14" height="14" fill="#a9c6ee" /><path d="M6 1h3l2 4-1 4 5 6H9l-1-3-2 3H2l4-7z" fill="#113a75" /></>,
  <Letter bg="#f9fbfd" c="#16406e" t="S" />,
  <><rect x="1" y="1" width="14" height="14" fill="#1e4f8b" /><path d="M3 5l8 6V5l-8 6zM11 3l2.500 1v8L11 13z" fill="none" stroke="#fff" strokeWidth="1.700" /></>,
  <><rect x="1" y="1" width="14" height="14" fill="#f3f3f0" /><path d="M1 1h7v3H1z" fill="#49b97f" /><path d="M12 1h3v8h-3z" fill="#e0a92d" /><path d="M9 12h6v3H9z" fill="#d23a5b" /><text x="7.500" y="12.500" textAnchor="middle" fontSize="11" fontWeight="bold" fill="#222">S</text></>,
  <><rect x="1" y="1" width="14" height="14" fill="#262626" /><path d="M2 4q4 3 6 2t5-2l1 3-4 2-1 4-2-3-4-1z" fill="#e3e3e3" /></>,
  <><path d="M2 2h10v12H2z" fill="#f7f7e8" /><path d="M2 8h11v6H2z" fill="#64aa32" /><path d="M8 8l6-7" stroke="#e5912a" strokeWidth="2" /><path d="M4 6h3" stroke="#333" /></>,
  <><rect x="1" y="1" width="14" height="14" fill="#6ca2e1" /><path d="M6 2q4-1 4 3l-1 3 5 6H9l-1-2-2 2H2l4-6z" fill="#163f86" /></>,
  <><ellipse cx="6" cy="5" rx="5" ry="4" fill="#f5f5f5" stroke="#c55" /><path d="M5 3l8 10M12 6l-7 5" stroke="#c94b4b" strokeWidth="1.500" /><circle cx="12" cy="13" r="2" fill="none" stroke="#567fb8" strokeWidth="1.300" /></>,
  <><circle cx="8" cy="8" r="6.500" fill="#1d3f6e" /><circle cx="8" cy="8" r="4" fill="none" stroke="#b5cce8" strokeWidth="1.200" strokeDasharray="2 1" /><circle cx="8" cy="8" r="1.500" fill="#fff" /></>,
  <><path d="M8 2h7v12H8z" fill="#eaf3ec" stroke="#2b7f4f" /><path d="M10 5h4M10 8h4M10 11h4" stroke="#2b7f4f" /><path d="M1 2l9-1v14l-9-1z" fill="#17703f" /><path d="M3.500 5l4 6M7.500 5l-4 6" stroke="#fff" strokeWidth="1.500" /></>,
  <><path d="M5 4h10v7H5z" fill="#dfe8f1" stroke="#7490ae" /><path d="M7 8l-5 6" stroke="#678" strokeWidth="1.500" /><circle cx="6.500" cy="8" r="2" fill="#cfe4f7" stroke="#567" /></>,
  <><path d="M3 1h10v14H3z" fill="#c6ddf2" stroke="#77a5cf" /><path d="M4 3h8v3H4z" fill="#eef5fb" /><path d="M5 8h2M9 8h2M5 11h2M9 11h2" stroke="#5c8ebd" strokeWidth="1.400" /></>,
  <><path d="M2 3l6-2 6 3v9l-5 2-7-3z" fill="#3f567d" /><path d="M2 3l5 1v9l-5-2z" fill="#c0443a" /><path d="M8.500 5l4 1v3l-4-1z" fill="#74b2d6" /><path d="M8.500 10l4 1v2l-4 1z" fill="#6d9e45" /></>,
  <><path d="M2 3l6-2 6 3v9l-5 2-7-3z" fill="#3f567d" /><path d="M2 3l5 1v9l-5-2z" fill="#c0443a" /><path d="M8.500 5l4 1v3l-4-1z" fill="#74b2d6" /><path d="M8.500 10l4 1v2l-4 1z" fill="#8a5c9d" /></>,
  <><rect x="1" y="1" width="14" height="14" fill="#f2b80a" /><path d="M3 5h10v7H3z" fill="none" stroke="#222" strokeWidth="1.300" /><path d="M5 11V9M7.500 11V8M10.500 11V6.500" stroke="#222" strokeWidth="1.500" /></>,
  <><rect x="1" y="3" width="14" height="10" fill="#26292c" /><path d="M1 3h14v2H1z" fill="#6c7174" /></>,
  <><path d="M3.500 5q4.500-4.500 9 0M3.500 11q4.500 4.500 9 0" stroke="#e5793a" strokeWidth="1.600" fill="none" /><circle cx="3.500" cy="2" r="0.900" fill="#777" /><circle cx="13" cy="2" r="0.900" fill="#777" /></>,
  <text x="8" y="14" textAnchor="middle" fontSize="16" fontWeight="bold" fill="#1c5a9c" stroke="#1c5a9c" strokeWidth="0.6">R</text>,
  <><path d="M1 3h14v8H1z" fill="#f7f7f7" stroke="#999" /><text x="8" y="9.500" textAnchor="middle" fontSize="5.500" fill="#333">SVG</text><path d="M5 14h6M8 11v3" stroke="#777" strokeWidth="1.300" /></>,
  <Letter bg="#dce8f6" c="#1b5eab" t="D" />,
  <><rect x="1" y="1" width="14" height="14" fill="#1d9a62" /><path d="M1 10h14v5H1z" fill="#0d5c43" /><text x="8" y="12.500" textAnchor="middle" fontSize="12" fontWeight="bold" fill="#062b20">N</text></>,
  <><circle cx="8" cy="8" r="7" fill="#dd4b3e" /><path d="M8 8L2 4.500A7 7 0 0 0 7 15z" fill="#23a15d" /><path d="M8 8l-1 7A7 7 0 0 0 14.500 6H8z" fill="#fccd3f" /><circle cx="8" cy="8" r="3.300" fill="#fff" /><circle cx="8" cy="8" r="2.500" fill="#4a88ee" /></>,
  <><path d="M2 3l7-1v8l-7 1z" fill="#bfe3a0" /><path d="M7 5l8 1-1 8-8-1z" fill="#f4e269" /></>,
  <><circle cx="8" cy="8" r="7" fill="#1c9ee2" /><text x="8" y="12" textAnchor="middle" fontSize="11" fontWeight="bold" fill="#fff">S</text><circle cx="13" cy="13" r="2.500" fill="#7cbb3a" /></>,
  <><path d="M7 2h8v12H7z" fill="#f8e7e0" stroke="#c7472a" /><path d="M1 2l9-1v14l-9-1z" fill="#cb4123" /><text x="5.500" y="11" textAnchor="middle" fontSize="9" fontWeight="bold" fill="#fff">P</text></>,
  <><rect x="0.500" y="0.500" width="15" height="15" rx="1" fill="#76839a" /><path d="M3 5h2V3.500h5V5h1.500v2L14 6v5l-2.500-1v3H3z" fill="#fafafa" /></>,
];
const lit = new Set([0, 1, 2, 3, 5, 9, 15, 19, 23, 24]);
const litDark = new Set([25, 26, 27]);

function Taskbar() {
  return (
    <div className="flex h-[18px] bg-[linear-gradient(to_right,#155a9c_0px,#2484c8_40px,#2f8ed0_205px,#a9cdf6_216px,#a9cdf6_657px,#0c3b78_660px,#123f7e_840px)] text-[5.100px] text-white">
      <div className="flex w-[25.400px] shrink-0 items-center justify-center">
        <svg width="16" height="16" viewBox="0 0 16 16"><circle cx="8" cy="8" r="7.500" fill="#2a6aa5" stroke="#8fbadf" strokeWidth="0.700" /><path d="M3.500 5q2-1.500 4-.5v3.300q-2-1-4 0z" fill="#ee7437" /><path d="M8.200 4.700q2 1 4 0V8q-2 1-4 0z" fill="#8dc63f" /><path d="M3.500 8.500q2-1 4 0v3.300q-2-1-4 0z" fill="#3ba7e5" /><path d="M8.200 8.700q2 1 4 0V12q-2 1-4 0z" fill="#fbcb3b" /></svg>
      </div>
      {taskIcons.map((ic, i) => (
        <div key={i} className={`flex w-[25.150px] shrink-0 items-center justify-center ${lit.has(i) ? 'border-x border-white/40 bg-white/25' : litDark.has(i) ? 'border-x border-white/25 bg-white/10' : ''}`}>
          <svg width="14" height="14" viewBox="0 0 16 16" className="font-['Liberation_Sans',sans-serif]">{ic}</svg>
        </div>
      ))}
      <svg width="71" height="18" viewBox="950 569 71 18" fill="none" stroke="#e8eef5" className="shrink-0">
        <path d="M955 579.500h3l-1.500-2z" fill="#fff" stroke="none" /><path d="M964.500 575.500h6v6h-6z" fill="#f4f6f8" /><path d="M966 577h3v2.500h-3z" fill="#334" stroke="none" />
        <path d="M977.500 575v7M978 575.500h4.500v3H978" fill="#fff" strokeWidth="0.8" /><path d="M988.500 576h5v3h-5z" fill="#e8b83d" stroke="none" /><path d="M989.500 580h3v2h-3z" fill="#ddd" stroke="none" />
        <path d="M999 576h5v4.500h-5zM998.500 582h4" strokeWidth="0.8" /><path d="M1009 577.500h1.500l2-2v6l-2-2h-1.500z" fill="#fff" strokeWidth="0.500" /><path d="M1014 577v3" />
      </svg>
      <div className="flex flex-1 flex-col items-center justify-center pl-px leading-[7px] whitespace-nowrap"><span>14:14</span><span>27/10/2017</span></div>
      <div className="w-[6px] border-l border-[#6e94bf] bg-[#2d5d97]" />
    </div>
  );
}

/* ---------- slide ---------- */

const snake = 'M14.250.18l.9.2.73.26.59.3.45.32.34.34.25.34.16.33.1.3.04.26.02.2-.01.13V8.500l-.05.63-.13.55-.21.46-.26.38-.3.31-.33.25-.35.19-.35.14-.33.1-.3.07-.26.04-.21.02H8.770l-.69.05-.59.14-.5.22-.41.27-.33.32-.27.35-.2.36-.15.37-.1.35-.07.32-.04.27-.02.21v3.060H3.170l-.21-.03-.28-.07-.32-.12-.35-.18-.36-.26-.36-.36-.35-.46-.32-.59-.28-.73-.21-.88-.14-1.050-.05-1.230.06-1.220.16-1.040.24-.87.32-.71.36-.57.4-.44.42-.33.42-.24.4-.16.36-.1.32-.05.24-.01h.16l.06.01h8.160v-.83H6.180l-.01-2.750-.02-.37.05-.34.11-.31.17-.28.25-.26.31-.23.38-.2.44-.18.51-.15.58-.12.64-.1.71-.06.77-.04.84-.02 1.270.05z';

function PythonLogo() {
  return (
    <div className="flex w-[40px] flex-col items-center">
      <svg width="22" height="22" viewBox="0 0 24 24">
        <path d={snake} fill="#3873a5" /><circle cx="8.800" cy="3" r="1" fill="#f9f9f9" />
        <g transform="rotate(180 12 12)"><path d={snake} fill="#fbce3d" /><circle cx="8.800" cy="3" r="1" fill="#f9f9f9" /></g>
      </svg>
      <span className="flex pl-[2px] font-['Noto_Sans',sans-serif] text-[9.300px] leading-[15px] tracking-[-0.100px] text-[#666]">python<sup className="text-[3px]">™</sup></span>
    </div>
  );
}

export default function App() {
  return (
    <main className="flex h-[720px] w-[1280px] flex-col overflow-hidden bg-[#f9f9f9] font-['Open_Sans','Noto_Sans',sans-serif]">
      <section className="flex h-[656px] items-start">
        <div className="flex h-[586px] w-[220px] items-end justify-end pr-[5px]"><PythonLogo /></div>
        <div className="relative mt-[63px] flex h-[524px] w-[840px] flex-col overflow-hidden">
          <Header />
          <Ribbon />
          <OptionsBar />
          <DrawingArea />
          <ViewBar />
          <StatusBar />
          <Taskbar />
          <PropertiesPalette />
          <DynamoWindow />
        </div>
      </section>
      <footer className="flex h-[64px] items-center justify-between bg-[#29a9e1] pl-[12px] text-white">
        <span className="mb-[8px] font-['Liberation_Sans',sans-serif] text-[14.500px]">30</span>
        <span className="w-[113px] origin-left scale-x-[0.850] font-['Liberation_Serif',serif] text-[38px] leading-none [-webkit-text-stroke:0.700px_white]">ARUP</span>
      </footer>
    </main>
  );
}
